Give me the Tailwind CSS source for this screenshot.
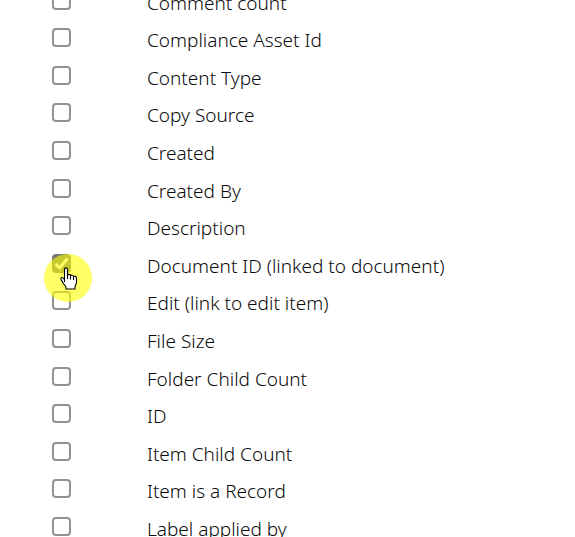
<!DOCTYPE html>
<html lang="en">
<head>
  <meta charset="UTF-8">
  <meta name="viewport" content="width=device-width, initial-scale=1.0">
  <title>Edit view - Columns</title>
  <script src="https://cdn.jsdelivr.net/npm/@tailwindcss/browser@4"></script>
</head>
<body class="h-screen overflow-hidden bg-white font-['Noto_Sans',sans-serif] text-[19px] font-light text-[#0a0a0a]">
  <main class="-mt-[19px] pl-[52px]">
    <ul class="[&>li]:flex [&>li]:h-[38px] [&>li]:items-center [&>li]:gap-[76px] [&>li:nth-child(5n+2)]:h-[37px] [&>li:nth-child(5n+4)]:h-[37px] [&_label]:pt-[6px] [&_input]:block [&_input]:size-[19px] [&_input]:appearance-none [&_input]:rounded-[4px] [&_input]:border-2 [&_input]:border-[#929292] [&_input]:bg-white [&_input:checked]:border-[#767676] [&_input:checked]:bg-[#767676]">
      <li><input type="checkbox" id="comment-count"><label for="comment-count">Comment count</label></li>
      <li><input type="checkbox" id="compliance-asset-id"><label for="compliance-asset-id">Compliance Asset Id</label></li>
      <li><input type="checkbox" id="content-type"><label for="content-type">Content Type</label></li>
      <li><input type="checkbox" id="copy-source"><label for="copy-source">Copy Source</label></li>
      <li><input type="checkbox" id="created"><label for="created">Created</label></li>
      <li><input type="checkbox" id="created-by"><label for="created-by">Created By</label></li>
      <li><input type="checkbox" id="description"><label for="description">Description</label></li>
      <li>
        <div class="relative">
          <input type="checkbox" id="document-id" checked>
          <svg class="pointer-events-none absolute inset-0 size-full" viewBox="0 0 19 19" fill="none" stroke="#fff" stroke-width="2.8">
            <path d="M3.5 10 L7.5 14 L15.5 4.5" />
          </svg>
          <!-- Click highlight and pointer -->
          <div class="pointer-events-none absolute -left-2 top-0 z-10 size-[48px] rounded-full bg-[#ffff00]/60">
            <svg class="absolute left-4 top-[13px] h-[24px] w-[18px]" viewBox="0 0 18 24" fill="#fff" stroke="#000" stroke-width="1.1" stroke-linejoin="round" stroke-linecap="round">
              <path d="M4.5 14.5 V2.3 C4.5 .4 7.5 .4 7.5 2.3 V8.2 C8 6.9 10.4 7.2 10.5 8.7 C11.2 7.7 13.3 8 13.5 9.6 C14.4 8.8 16.4 9.3 16.5 11 V15.5 C16.5 17 15 18.5 15 20 V22 H6 V20.3 C5 18.5 3.2 16.5 1.6 13.6 C.6 12 .6 10.6 1.8 10.5 C3 10.4 4 11.6 4.5 13" />
              <path d="M7.5 8 V11.5 M10.5 8.7 V12 M13.5 9.6 V12.5" fill="none" />
            </svg>
          </div>
        </div>
        <label for="document-id">Document ID (linked to document)</label>
      </li>
      <li><input type="checkbox" id="edit"><label for="edit">Edit (link to edit item)</label></li>
      <li><input type="checkbox" id="file-size"><label for="file-size">File Size</label></li>
      <li><input type="checkbox" id="folder-child-count"><label for="folder-child-count">Folder Child Count</label></li>
      <li><input type="checkbox" id="id"><label for="id">ID</label></li>
      <li><input type="checkbox" id="item-child-count"><label for="item-child-count">Item Child Count</label></li>
      <li><input type="checkbox" id="item-is-a-record"><label for="item-is-a-record">Item is a Record</label></li>
      <li><input type="checkbox" id="label-applied-by"><label for="label-applied-by">Label applied by</label></li>
    </ul>
  </main>
</body>
</html>
